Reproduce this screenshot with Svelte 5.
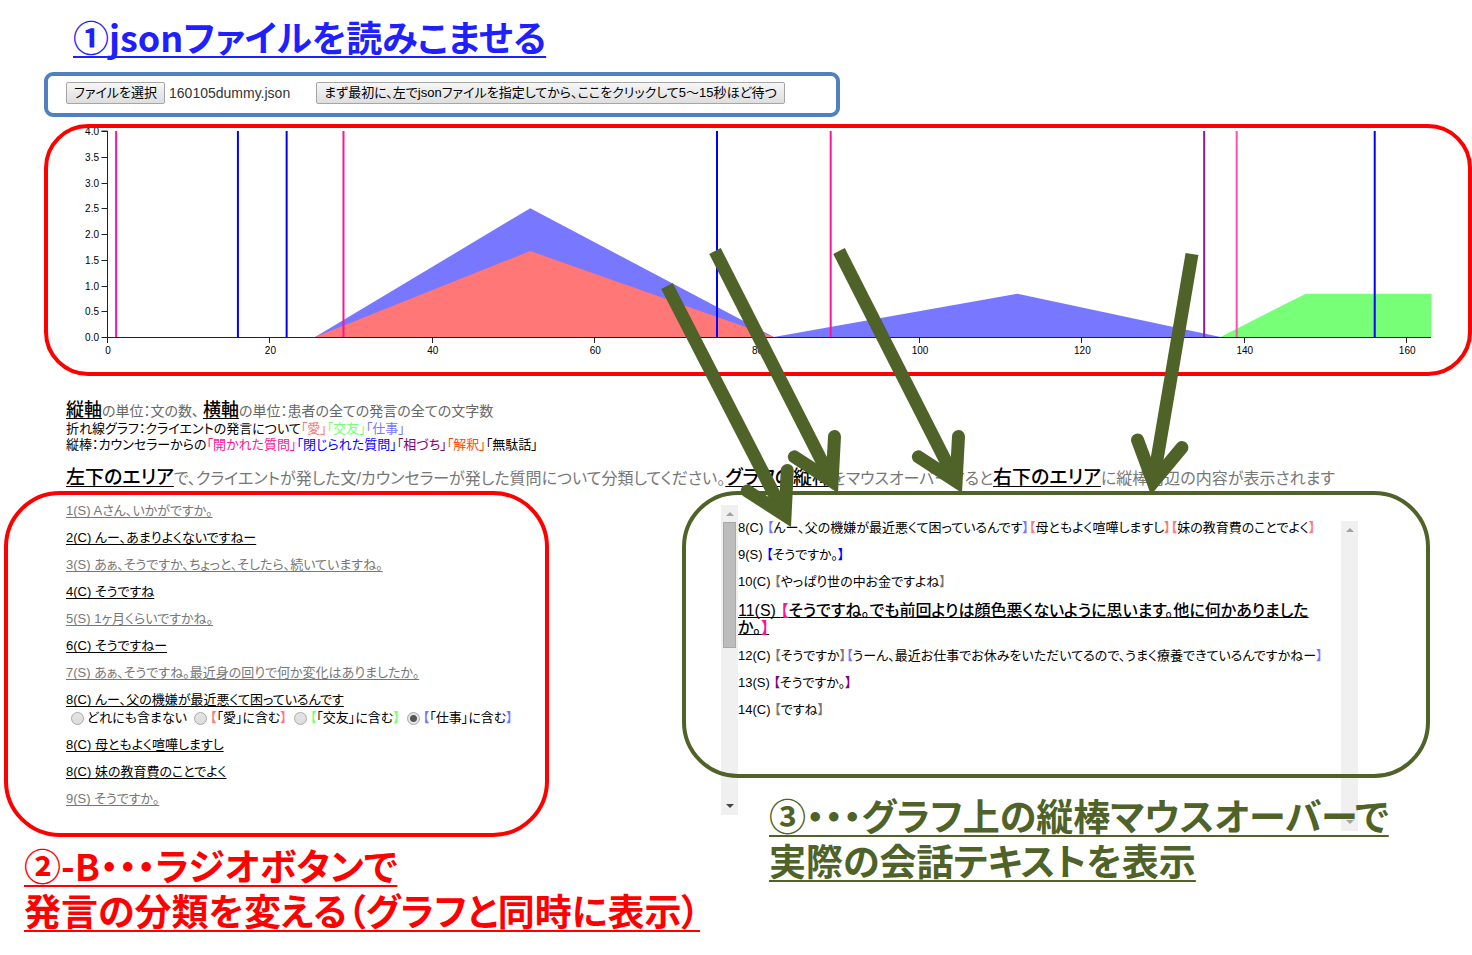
<script>
  let fileInput;
  let fileName = $state('160105dummy.json');
  let category = $state('work');

  const pickFile = (event) => {
    const file = event.currentTarget.files[0];
    if (file) fileName = file.name;
  };

  // Chart scales
  const x = (v) => 108 + v * 8.12;
  const y = (v) => 337 - v * 51.5;
  const points = (list) => list.map(([a, b]) => `${x(a)},${y(b)}`).join(' ');

  const yTicks = [0, 0.5, 1, 1.5, 2, 2.5, 3, 3.5, 4];
  const xTicks = [0, 20, 40, 60, 80, 100, 120, 140, 160];
  const areas = [
    { color: '#7777ff', data: [[25.5, 0], [52, 2.5], [82, 0]] },
    { color: '#ff7777', data: [[25.5, 0], [52, 1.67], [82, 0]] },
    { color: '#7777ff', data: [[82, 0], [112, 0.84], [137, 0]] },
    { color: '#77ff77', data: [[137, 0], [147.5, 0.84], [163, 0.84], [163, 0]] }
  ];
  const bars = [
    { at: 1, color: '#ff1493' },
    { at: 16, color: '#0000ff' },
    { at: 22, color: '#0000ff' },
    { at: 29, color: '#ff1493' },
    { at: 75, color: '#0000ff' },
    { at: 89, color: '#ff1493' },
    { at: 135, color: '#8b1a8b' },
    { at: 139, color: '#ff4fae' },
    { at: 156, color: '#0000ff' }
  ];

  // Arrows run from a tail to a sharp tip, with two barbs 30 degrees off the shaft
  const arrow = ([x1, y1], [x2, y2]) => {
    const a = Math.atan2(y2 - y1, x2 - x1);
    const vx = x2 - 13 * Math.cos(a);
    const vy = y2 - 13 * Math.sin(a);
    const barb = (t) => `${vx - 45 * Math.cos(a + t)},${vy - 45 * Math.sin(a + t)}`;
    return {
      shaft: `M${x1},${y1} L${vx},${vy}`,
      head: `M${barb(Math.PI / 6)} L${vx},${vy} L${barb(-Math.PI / 6)}`
    };
  };
  const arrows = [
    arrow([667, 286], [791, 527]),
    arrow([715, 251], [838, 493]),
    arrow([839, 251], [962, 493]),
    arrow([1192, 254], [1151, 495])
  ];

  const lines = [
    { who: '1(S)', text: 'Aさん、いかがですか。' },
    { who: '2(C)', text: 'んー、あまりよくないですねー', client: true },
    { who: '3(S)', text: 'あぁ、そうですか、ちょっと、そしたら、続いていますね。' },
    { who: '4(C)', text: 'そうですね', client: true },
    { who: '5(S)', text: '1ヶ月くらいですかね。' },
    { who: '6(C)', text: 'そうですねー', client: true },
    { who: '7(S)', text: 'あぁ、そうですね。最近身の回りで何か変化はありましたか。' },
    { who: '8(C)', text: 'んー、父の機嫌が最近悪くて困っているんです', client: true, open: true },
    { who: '8(C)', text: '母ともよく喧嘩しますし', client: true },
    { who: '8(C)', text: '妹の教育費のことでよく', client: true },
    { who: '9(S)', text: 'そうですか。' }
  ];

  const choices = [
    { id: 'none', text: 'どれにも含まない' },
    { id: 'love', text: '「愛」に含む', tone: 'love' },
    { id: 'friend', text: '「交友」に含む', tone: 'friend' },
    { id: 'work', text: '「仕事」に含む', tone: 'work' }
  ];

  const talk = [
    {
      who: '8(C)',
      parts: [
        ['work', 'んー、父の機嫌が最近悪くて困っているんです'],
        ['love', '母ともよく喧嘩しますし'],
        ['love', '妹の教育費のことでよく']
      ]
    },
    { who: '9(S)', parts: [['closed', 'そうですか。']] },
    { who: '10(C)', parts: [['plain', 'やっぱり世の中お金ですよね']] },
    {
      who: '11(S)',
      current: true,
      parts: [['open', 'そうですね。でも前回よりは顔色悪くないように思います。他に何かありましたか。']]
    },
    {
      who: '12(C)',
      parts: [
        ['plain', 'そうですか'],
        ['work', 'うーん、最近お仕事でお休みをいただいてるので、うまく療養できているんですかねー']
      ]
    },
    { who: '13(S)', parts: [['nod', 'そうですか。']] },
    { who: '14(C)', parts: [['plain', 'ですね']] }
  ];
</script>

<main>
  <h1 class="note step1">①jsonファイルを読みこませる</h1>

  <div class="toolbar">
    <button type="button" onclick={() => fileInput.click()}>ファイルを選択</button>
    <input bind:this={fileInput} type="file" accept=".json" aria-label="ファイルを選択" hidden onchange={pickFile} />
    <span class="file">{fileName}</span>
    <button type="button">まず最初に、左でjsonファイルを指定してから、ここをクリックして5～15秒ほど待つ</button>
  </div>

  <div class="chart">
    <svg viewBox="48 128 1420 244">
      {#each areas as area}
        <polygon points={points(area.data)} fill={area.color} />
      {/each}
      {#each bars as bar}
        <line x1={x(bar.at)} x2={x(bar.at)} y1="131" y2="337" stroke={bar.color} stroke-width="2" />
      {/each}
      <path class="axis" d="M101.5,131 H107.5 V337.5 H1431" />
      {#each yTicks as t}
        <line class="axis" x1="101.5" x2="107.5" y1={Math.round(y(t)) + 0.5} y2={Math.round(y(t)) + 0.5} />
        <text x="99" y={y(t) + 4} text-anchor="end">{t.toFixed(1)}</text>
      {/each}
      {#each xTicks as t}
        <line class="axis" x1={Math.round(x(t)) - 0.5} x2={Math.round(x(t)) - 0.5} y1="337" y2="343" />
        <text x={x(t)} y="354" text-anchor="middle">{t}</text>
      {/each}
    </svg>
  </div>

  <div class="legend">
    <p class="units"><strong>縦軸</strong>の単位：文の数、 <strong>横軸</strong>の単位：患者の全ての発言の全ての文字数</p>
    <p>折れ線グラフ：クライエントの発言について<span class="love">「愛」</span><span class="friend">「交友」</span><span class="work">「仕事」</span></p>
    <p>縦棒：カウンセラーからの<span class="open">「開かれた質問」</span><span class="closed">「閉じられた質問」</span><span class="nod">「相づち」</span><span class="reading">「解釈」</span>「無駄話」</p>
  </div>

  <p class="guide"><strong>左下のエリア</strong>で、クライエントが発した文/カウンセラーが発した質問について分類してください。<strong>グラフの縦棒</strong>をマウスオーバーすると<strong>右下のエリア</strong>に縦棒周辺の内容が表示されます</p>

  <div class="areas">
    <section>
      <ul class="panel list">
        {#each lines as line}
          <li>
            <a href="#talk" class:client={line.client}>{line.who} {line.text}</a>
            {#if line.open}
              <div class="choices">
                {#each choices as c}
                  <label>
                    <input type="radio" name="category" value={c.id} bind:group={category} />
                    {#if c.tone}<span><b class={c.tone}>【</b>{c.text}<b class={c.tone}>】</b></span>{:else}<span>{c.text}</span>{/if}
                  </label>
                {/each}
              </div>
            {/if}
          </li>
        {/each}
      </ul>
      <h2 class="note step2">②-B・・・ラジオボタンで<br />発言の分類を変える（グラフと同時に表示）</h2>
    </section>

    <section>
      <div class="panel talk" id="talk">
        <div class="scrollbar first"><i class="up"></i><i class="thumb"></i><i class="down dark"></i></div>
        <div class="lines">
          {#each talk as row}
            <p class:current={row.current}>{row.who} {#each row.parts as [tone, text]}<b class={tone}>【</b>{text}<b class={tone}>】</b>{/each}</p>
          {/each}
        </div>
        <div class="scrollbar second"><i class="up"></i><i class="down"></i></div>
      </div>
      <h2 class="note step3">③・・・グラフ上の縦棒マウスオーバーで<br />実際の会話テキストを表示</h2>
    </section>
  </div>

  <svg class="arrows" width="1472" height="955" aria-hidden="true">
    {#each arrows as a}
      <path d={a.shaft} />
      <path d={a.head} stroke-linecap="round" />
    {/each}
  </svg>
</main>

<style>
  :global(body) {
    margin: 0;
    background: #fff;
  }
  main {
    position: relative;
    isolation: isolate;
    overflow: hidden;
    padding: 14px 0 20px;
    font: 13px/14px 'Liberation Sans', 'Noto Sans CJK JP', sans-serif;
    font-feature-settings: 'palt';
    color: #000;
  }
  p, h1, h2, ul {
    margin: 0;
    padding: 0;
  }
  .note {
    font: 700 37px/45px 'Noto Sans CJK JP', sans-serif;
    font-feature-settings: 'palt';
    white-space: nowrap;
    text-decoration: underline 2px;
    text-underline-offset: 4px;
    text-decoration-skip-ink: none;
  }
  .step1 {
    margin-left: 73px;
    font-size: 36px;
    color: #1f1fff;
  }
  .step2 {
    margin: 6px 0 0 20px;
    color: #f00;
  }
  .step3 {
    margin: 15px 0 0 87px;
    color: #4f6228;
  }

  .toolbar {
    display: flex;
    align-items: center;
    width: fit-content;
    box-sizing: border-box;
    height: 45px;
    margin: 13px 0 7px 44px;
    padding: 0 51px 4px 18px;
    border: 4px solid #4f81bd;
    border-radius: 9px;
  }
  .toolbar button {
    height: 22px;
    padding: 0 7px;
    border: 1px solid #a6a6a6;
    border-radius: 2px;
    background: linear-gradient(#f6f6f6, #dedede);
    font: inherit;
    font-feature-settings: 'palt';
    color: #000;
    white-space: nowrap;
  }
  .file {
    margin: 0 26px 0 4px;
    font-size: 14px;
    color: #333;
  }

  .chart {
    margin-left: 44px;
    border: 4px solid #f00;
    border-radius: 44px;
  }
  .chart svg {
    display: block;
    width: 100%;
  }
  .chart text {
    font-size: 10px;
  }
  .axis {
    fill: none;
    stroke: #222;
  }

  .legend {
    margin: 25px 0 0 66px;
    line-height: 16px;
    white-space: nowrap;
  }
  .units {
    margin-bottom: 1px;
    font-size: 14px;
    line-height: 18px;
    color: #666;
  }
  strong {
    font-weight: 500;
    font-size: 18px;
    color: #000;
    text-decoration: underline;
    text-underline-offset: 2px;
    text-decoration-skip-ink: none;
  }
  .guide {
    margin: 13px 0 1px 66px;
    font-size: 16px;
    line-height: 23px;
    white-space: nowrap;
    color: #777;
  }
  .guide strong {
    font-size: 19px;
  }
  .love { color: #ff7777; }
  .friend { color: #77ff77; }
  .work { color: #7777ff; }
  .open { color: #ff1493; }
  .closed { color: #0000ff; }
  .nod { color: #800080; }
  .reading { color: #ff4500; }
  .plain { color: #777; }

  .areas {
    display: grid;
    grid-template-columns: minmax(0, 545fr) minmax(0, 748fr);
    gap: 133px;
    padding: 0 42px 0 4px;
  }
  .panel {
    border: 4px solid;
    border-radius: 56px;
  }
  .list {
    display: grid;
    gap: 13px;
    padding: 9px 0 27px 58px;
    border-color: #f00;
    list-style: none;
    white-space: nowrap;
  }
  .list a {
    display: block;
    width: fit-content;
    color: #777;
    text-underline-offset: 2px;
    text-decoration-skip-ink: none;
  }
  .list .client {
    color: #000;
  }
  .choices {
    display: flex;
    gap: 7px;
    padding: 4px 0 0 5px;
  }
  .choices label {
    display: flex;
    align-items: center;
    gap: 3px;
    height: 14px;
  }
  .choices input {
    appearance: none;
    width: 13px;
    height: 13px;
    margin: 0;
    border: 1px solid #a9a9a9;
    border-radius: 50%;
    background: linear-gradient(#e4e4e4, #dcdcdc);
  }
  .choices input:checked {
    background: radial-gradient(circle, #555 3px, #e4e4e4 4px);
  }
  b {
    font-weight: 700;
  }

  .talk {
    display: flex;
    align-items: flex-start;
    padding: 0 68px 0 35px;
    border-color: #4f6228;
  }
  .lines {
    flex: 1;
    display: grid;
    gap: 13px;
    min-width: 0;
    padding-top: 26px;
  }
  .lines p {
    white-space: nowrap;
  }
  .lines .current {
    padding-right: 12px;
    font-size: 16px;
    line-height: 17px;
    font-weight: 500;
    white-space: normal;
    text-decoration: underline;
    text-underline-offset: 1px;
    text-decoration-skip-ink: none;
  }
  .scrollbar {
    position: relative;
    z-index: -1;
    display: flex;
    flex-direction: column;
    align-items: center;
    box-sizing: border-box;
    width: 17px;
    height: 310px;
    padding: 7px 0;
    background: #f0f0f0;
  }
  .first {
    margin: 10px 0 -41px;
  }
  .second {
    margin: 26px 0 -57px;
  }
  .up, .down {
    border: 4px solid transparent;
  }
  .up {
    border-top-width: 0;
    border-bottom-color: #a3a3a3;
  }
  .down {
    margin-top: auto;
    border-bottom-width: 0;
    border-top-color: #a3a3a3;
  }
  .down.dark {
    border-top-color: #444;
  }
  .thumb {
    box-sizing: border-box;
    width: 13px;
    height: 126px;
    margin-top: 6px;
    border: 1px solid #a8a8a8;
    background: #bcbcbc;
  }

  .arrows {
    position: absolute;
    top: 0;
    left: 0;
    fill: none;
    stroke: #4f6228;
    stroke-width: 13px;
    pointer-events: none;
  }
</style>
